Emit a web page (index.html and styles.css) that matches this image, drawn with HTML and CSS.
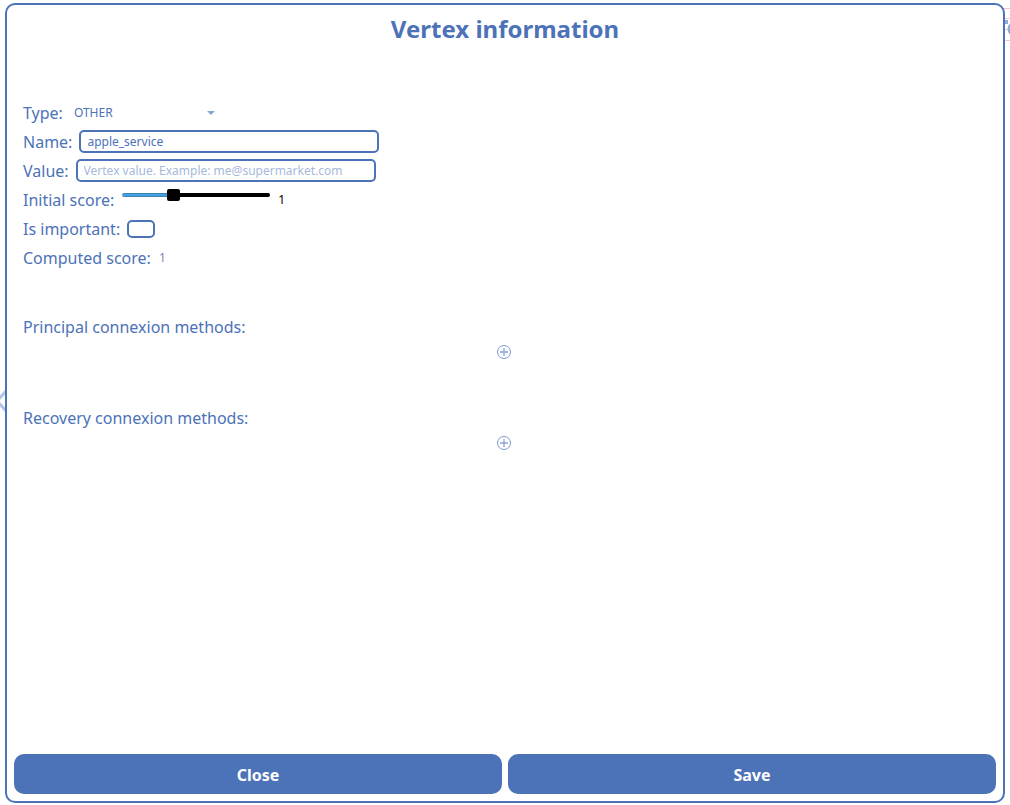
FILE: index.html
```html
<!DOCTYPE html>
<html lang="en">
<head>
<meta charset="utf-8">
<title>Vertex information</title>
<link rel="stylesheet" href="styles.css">
</head>
<body>
<div class="canvas" aria-hidden="true">
  <svg class="canvas-arrow" width="12" height="24" viewBox="0 0 12 24"><path d="M10 1 0 12l10 11" fill="none" stroke="#b3c3e3" stroke-width="3"/></svg>
  <svg class="canvas-panel" width="10" height="42" viewBox="0 0 10 42"><path d="M0 8.500h10M0 18.500h10M0 29.500h10M0 40.500h10" stroke="#f7c3cb"/><path d="M4 20h4v4H4z" fill="#8eabd9"/><circle cx="15" cy="29" r="6" fill="none" stroke="#8eabd9" stroke-width="3"/></svg>
</div>
<main class="dialog">
  <h1 class="title">Vertex information</h1>
  <form class="form" id="vertex">
    <div class="row">
      <label for="type">Type:</label>
      <span class="select-wrap">
        <select class="select" id="type"><option>OTHER</option></select>
        <svg class="caret" width="8" height="4" viewBox="0 0 8 4"><path d="M0 0h8L4 4z" fill="#8ba3d2"/></svg>
      </span>
    </div>
    <div class="row">
      <label for="name">Name:</label>
      <input class="text" id="name" type="text" value="apple_service">
    </div>
    <div class="row">
      <label for="value">Value:</label>
      <input class="text" id="value" type="text" placeholder="Vertex value. Example: me@supermarket.com">
    </div>
    <div class="row row-score">
      <label for="score">Initial score:</label>
      <input class="slider" id="score" type="range" min="0" max="3" value="1">
      <output class="score" for="score">1</output>
    </div>
    <div class="row">
      <label for="important">Is important:</label>
      <input class="check" id="important" type="checkbox">
    </div>
    <div class="row row-score">
      <span>Computed score:</span>
      <span class="computed">1</span>
    </div>
    <section class="methods">
      <h2 class="subtitle">Principal connexion methods:</h2>
      <button class="add" type="button" aria-label="Add principal connexion method">
        <svg width="14" height="14" viewBox="0 0 14 14"><circle cx="7" cy="7" r="6.500" fill="none" stroke="#7d98cd"/><path d="M7 3v8M3 7h8" stroke="#8ca5d5" stroke-width="1.300"/></svg>
      </button>
    </section>
    <section class="methods">
      <h2 class="subtitle">Recovery connexion methods:</h2>
      <button class="add" type="button" aria-label="Add recovery connexion method">
        <svg width="14" height="14" viewBox="0 0 14 14"><circle cx="7" cy="7" r="6.500" fill="none" stroke="#7d98cd"/><path d="M7 3v8M3 7h8" stroke="#8ca5d5" stroke-width="1.300"/></svg>
      </button>
    </section>
  </form>
  <footer class="actions">
    <button class="action" type="button">Close</button>
    <button class="action" type="submit" form="vertex">Save</button>
  </footer>
</main>
</body>
</html>
```
FILE: styles.css
```css
* { box-sizing: border-box; }

body {
  margin: 0;
  min-height: 100vh;
  padding: 3px 5px 2px;
  display: flex;
  background: #fff;
  color: #4c72b8;
  font: 16px/28px "Noto Sans", sans-serif;
}

.canvas {
  position: absolute;
  inset: 0;
  overflow: hidden;
}

.canvas-arrow {
  position: absolute;
  left: -3px;
  top: 389px;
}

.canvas-panel {
  position: absolute;
  right: 0;
  top: 0;
}

.dialog {
  position: relative;
  flex: 1;
  display: flex;
  flex-direction: column;
  padding: 7px;
  border: 2px solid #4c72b8;
  border-radius: 10px;
  background: #fff;
}

.title {
  margin: 0;
  font-size: 24px;
  line-height: 34px;
  text-align: center;
}

.form {
  flex: 1;
  padding: 52px 11px 0 9px;
}

.row {
  display: flex;
  align-items: center;
  gap: 7px;
  height: 29px;
}

.row-score { gap: 8px; }

.select-wrap {
  position: relative;
  display: flex;
  width: 150px;
}

.select {
  appearance: none;
  width: 100%;
  height: 22px;
  padding: 0 4px;
  border: 0;
  background: none;
  color: inherit;
  font: 12px "Noto Sans", sans-serif;
}

.caret {
  position: absolute;
  right: 5px;
  top: 9px;
  pointer-events: none;
}

.text {
  width: 300px;
  height: 23px;
  padding: 0 6px;
  border: 2px solid #4c72b8;
  border-radius: 5px;
  background: #fff;
  color: inherit;
  font: 12px "Noto Sans", sans-serif;
}

.text::placeholder { color: #a6b9dc; }

.slider {
  appearance: none;
  align-self: flex-start;
  width: 148px;
  height: 20px;
  margin: 0;
  background: none;
}

.slider::-webkit-slider-runnable-track {
  height: 4px;
  border-radius: 2px;
  background:
    linear-gradient(90deg, #45a2e0 34%, #000 34%) 0 1px / 100% 2px no-repeat,
    linear-gradient(90deg, #3b83b3 34%, #000 34%);
}

.slider::-webkit-slider-thumb {
  appearance: none;
  width: 13px;
  height: 12px;
  margin-top: -4px;
  border-radius: 2px;
  background: #000;
}

.score {
  color: #000;
  font-size: 12px;
}

.check {
  appearance: none;
  width: 28px;
  height: 18px;
  margin: 0;
  border: 2px solid #4c72b8;
  border-radius: 5px;
  background: #fff;
}

.check:checked { background: #4c72b8; }

.computed {
  color: #7b83bd;
  font-size: 12px;
}

.methods {
  display: flex;
  flex-direction: column;
  margin-top: 41px;
}

.subtitle {
  margin: 0;
  font-size: 16px;
  font-weight: 400;
}

.add {
  display: flex;
  align-self: center;
  padding: 4px;
  border: 0;
  background: none;
}

.actions {
  display: flex;
  gap: 6px;
}

.action {
  flex: 1;
  height: 40px;
  padding: 2px 6px 0;
  border: 0;
  border-radius: 10px;
  background: #4c72b8;
  color: #fff;
  font: bold 16px "Noto Sans", sans-serif;
}
```
